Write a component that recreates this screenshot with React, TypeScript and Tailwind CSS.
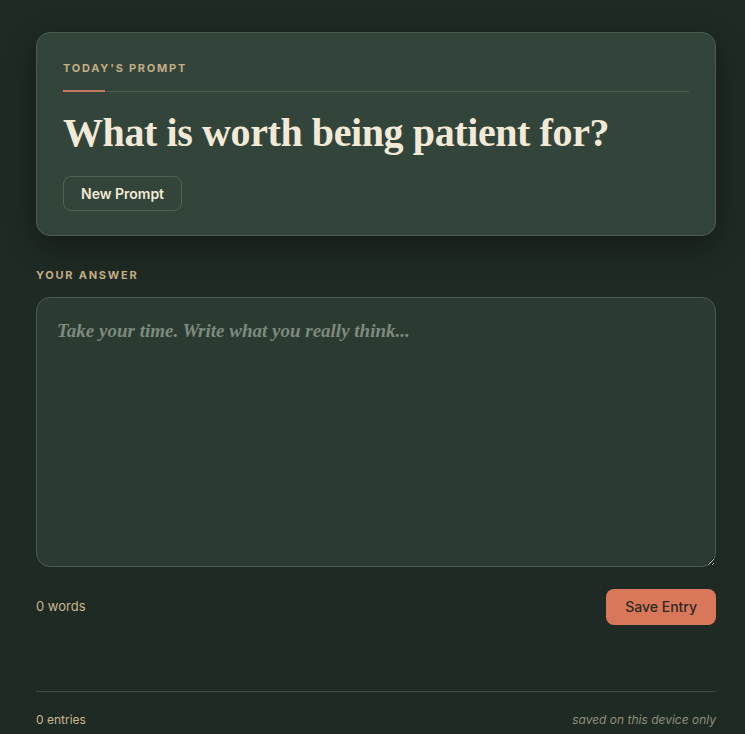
import React, { useState } from "react";

export default function App() {
  const [text, setText] = useState("");
  const words = text.trim() ? text.trim().split(/\s+/).length : 0;
  const sans = { fontFamily: "Inter, 'Noto Sans', sans-serif" };
  const serif = { fontFamily: "'Liberation Serif', 'DejaVu Serif', serif" };
  return (
    <div className="min-h-screen bg-[#1f2a24] text-[#ece5d3]" style={sans}>
      <div className="ml-9 w-[680px] pt-8 pb-6">
        <section className="rounded-[14px] border border-[#4a5b4f] bg-[#33453a] px-[26px] pt-[27px] pb-6 shadow-[0_10px_30px_rgba(0,0,0,0.35)]">
          <div className="text-[11px] font-bold uppercase leading-4 tracking-[0.16em] text-[#c2ad84]">
            Today's Prompt
          </div>
          <div className="mt-[14px] flex items-center">
            <div className="h-[2px] w-[42px] bg-[#c47a62]"></div>
            <div className="h-px flex-1 bg-[#4e5f52]"></div>
          </div>
          <h1
            className="mt-[17px] whitespace-nowrap text-[40px] font-bold leading-[48px] tracking-[-0.01em] text-[#f1ead8]"
            style={serif}
          >
            What is worth being patient for?
          </h1>
          <button className="mt-[19px] h-[35px] rounded-lg border border-[#506152] px-[17px] text-sm font-semibold text-[#f1ead8]">
            New Prompt
          </button>
        </section>

        <div className="mt-[31px] text-[11px] font-bold uppercase leading-4 tracking-[0.16em] text-[#c2ad84]">
          Your Answer
        </div>
        <textarea
          value={text}
          onChange={(e) => setText(e.target.value)}
          placeholder="Take your time. Write what you really think..."
          className="mt-[14px] block h-[270px] w-full resize-y rounded-[14px] border border-[#4a5b4f] bg-[#2c3b32] px-5 py-[19px] text-[19px] font-semibold italic leading-7 text-[#ece5d3] outline-none placeholder:text-[#7c8a7f]"
          style={serif}
        />
        <div className="mt-[22px] flex items-center justify-between">
          <span className="text-[13px] text-[#c9b78f]">{words} words</span>
          <button className="h-9 rounded-lg bg-[#d9775a] px-[19px] text-sm font-medium text-[#2a2a22]">
            Save Entry
          </button>
        </div>

        <div className="mt-[66px] h-px bg-[#3c4a40]"></div>
        <div className="mt-[19px] flex items-center justify-between text-[12px]">
          <span className="text-[#c9b78f]">0 entries</span>
          <span className="italic text-[#8f8f78]">saved on this device only</span>
        </div>
      </div>
    </div>
  );
}
